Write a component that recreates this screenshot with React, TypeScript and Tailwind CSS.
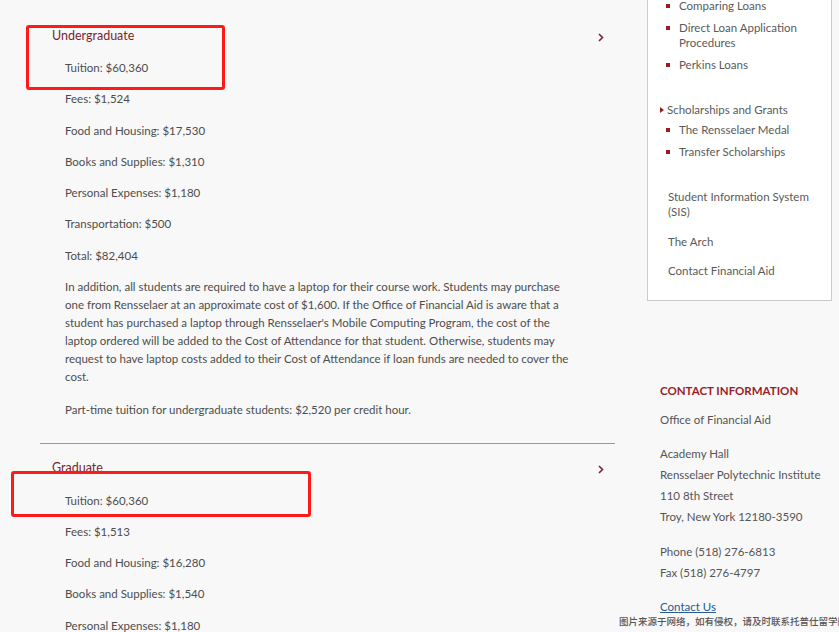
import React from "react";

const undergrad = [
  "Tuition: $60,360",
  "Fees: $1,524",
  "Food and Housing: $17,530",
  "Books and Supplies: $1,310",
  "Personal Expenses: $1,180",
  "Transportation: $500",
  "Total: $82,404",
];

const grad = [
  "Tuition: $60,360",
  "Fees: $1,513",
  "Food and Housing: $16,280",
  "Books and Supplies: $1,540",
  "Personal Expenses: $1,180",
];

function Chevron() {
  return (
    <svg width="6" height="9" viewBox="0 0 6 9" className="mt-[7px]">
      <path d="M1 1l3.5 3.5L1 8" fill="none" stroke="#7a2040" strokeWidth="1.6" />
    </svg>
  );
}

function Bullet({ children }: { children: React.ReactNode }) {
  return (
    <li className="flex">
      <span className="mt-[6px] ml-[18px] mr-[9px] h-[4px] w-[4px] shrink-0 bg-[#9b1c1c]" />
      <span>{children}</span>
    </li>
  );
}

export default function App() {
  return (
    <div
      className="relative flex h-[632px] w-[839px] overflow-hidden bg-[#f8f8f8] text-[#4d4d4d]"
      style={{ fontFamily: "Lato, 'Noto Sans', sans-serif" }}
    >
      {/* main column */}
      <div className="w-[647px] shrink-0 pl-[40px] pr-[32px] pt-[26px]">
        <div className="flex items-start justify-between pl-[12px] pr-[11px]">
          <h3 className="text-[12.5px] leading-[20px] text-[#7b1f2e]">Undergraduate</h3>
          <Chevron />
        </div>
        <div className="pl-[25px] pr-[45px] pt-[13px] text-[11.5px] leading-[18px]">
          {undergrad.map((t) => (
            <p key={t} className="mb-[13.3px]">
              {t}
            </p>
          ))}
          <p className="mb-[14.5px]">
            In addition, all students are required to have a laptop for their course work. Students may purchase
            one from Rensselaer at an approximate cost of $1,600. If the Office of Financial Aid is aware that a
            student has purchased a laptop through Rensselaer's Mobile Computing Program, the cost of the laptop
            ordered will be added to the Cost of Attendance for that student. Otherwise, students may request to
            have laptop costs added to their Cost of Attendance if loan funds are needed to cover the cost.
          </p>
          <p>Part-time tuition for undergraduate students: $2,520 per credit hour.</p>
        </div>
        <div className="mt-[24px] border-t border-[#999]" />
        <div className="flex items-start justify-between pl-[12px] pr-[11px] pt-[14px]">
          <h3 className="text-[12.5px] leading-[20px] text-[#7b1f2e]">Graduate</h3>
          <Chevron />
        </div>
        <div className="pl-[25px] pt-[14px] text-[11.5px] leading-[18px]">
          {grad.map((t) => (
            <p key={t} className="mb-[13.3px]">
              {t}
            </p>
          ))}
        </div>
      </div>

      {/* sidebar */}
      <div className="w-[185px] shrink-0">
        <div className="h-[303px] border-x border-b border-[#cccccc] bg-white text-[11.5px] leading-[15px] text-[#5a5a5a]">
          <ul className="-mt-[2px] flex flex-col gap-y-[7px] pr-[10px]">
            <Bullet>Comparing Loans</Bullet>
            <Bullet>Direct Loan Application Procedures</Bullet>
            <Bullet>Perkins Loans</Bullet>
          </ul>
          <div className="mt-[30px] flex items-center pl-[12px]">
            <svg width="4" height="6" viewBox="0 0 4 6" className="mr-[3px]">
              <path d="M0 0l4 3-4 3z" fill="#9b1c1c" />
            </svg>
            <span>Scholarships and Grants</span>
          </div>
          <ul className="mt-[5px] flex flex-col gap-y-[7px] pr-[10px]">
            <Bullet>The Rensselaer Medal</Bullet>
            <Bullet>Transfer Scholarships</Bullet>
          </ul>
          <div className="mt-[30px] flex w-[175px] flex-col gap-y-[14.5px] pl-[20px]">
            <p>Student Information System (SIS)</p>
            <p>The Arch</p>
            <p>Contact Financial Aid</p>
          </div>
        </div>

        <div className="pl-[13px] pt-[80px] text-[11.5px] leading-[21px] text-[#555]">
          <h4 className="mb-[8px] text-[11.5px] font-bold leading-[20px] text-[#9b1c2a]">CONTACT INFORMATION</h4>
          <p className="mb-[13px]">Office of Financial Aid</p>
          <p>Academy Hall</p>
          <p>Rensselaer Polytechnic Institute</p>
          <p>110 8th Street</p>
          <p className="mb-[14px]">Troy, New York 12180-3590</p>
          <p>Phone (518) 276-6813</p>
          <p className="mb-[13px]">Fax (518) 276-4797</p>
          <p className="text-[#2a5a8c] underline">Contact Us</p>
        </div>
      </div>

      {/* annotation boxes */}
      <div className="absolute left-[26px] top-[25px] h-[65px] w-[199px] rounded-[3px] border-[3px] border-[#ff1a1a]" />
      <div className="absolute left-[11px] top-[471px] h-[46px] w-[300px] rounded-[3px] border-[3px] border-[#ff1a1a]" />

      {/* watermark */}
      <div
        className="absolute left-[619px] top-[614px] whitespace-nowrap text-[9.5px] font-medium leading-[14px] text-[#555]"
        style={{ fontFamily: "'Noto Sans CJK SC', sans-serif" }}
      >
        图片来源于网络，如有侵权，请及时联系托普仕留学删除
      </div>
    </div>
  );
}
